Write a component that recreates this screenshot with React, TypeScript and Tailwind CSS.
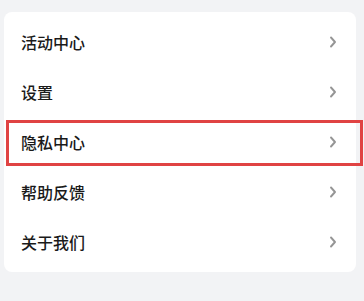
import React from "react";

const items = ["活动中心", "设置", "隐私中心", "帮助反馈", "关于我们"];

function Chevron() {
  return (
    <svg width="8" height="12" viewBox="0 0 8 12" className="block">
      <polyline points="2,1.5 6,6 2,10.5" fill="none" stroke="#959595" strokeWidth="1.9" strokeLinecap="round" strokeLinejoin="round" />
    </svg>
  );
}

export default function App() {
  return (
    <div
      className="relative w-[364px] h-[301px] bg-[#f2f3f5] pl-[4px] pt-[12px] overflow-hidden"
      style={{ fontFamily: '"Noto Sans CJK SC", "Noto Sans", sans-serif' }}
    >
      <div className="w-[352px] bg-white rounded-[8px] py-[5px]">
        {items.map((t) => (
          <div key={t} className="h-[50px] flex items-center justify-between pl-[17px] pr-[19px]">
            <span className="text-[16px] leading-none font-medium text-[#1a1a1a]">{t}</span>
            <Chevron />
          </div>
        ))}
      </div>
      <div className="absolute left-[6px] top-[120px] w-[357px] h-[46px] border-[3px] border-[#e04343]" />
    </div>
  );
}
